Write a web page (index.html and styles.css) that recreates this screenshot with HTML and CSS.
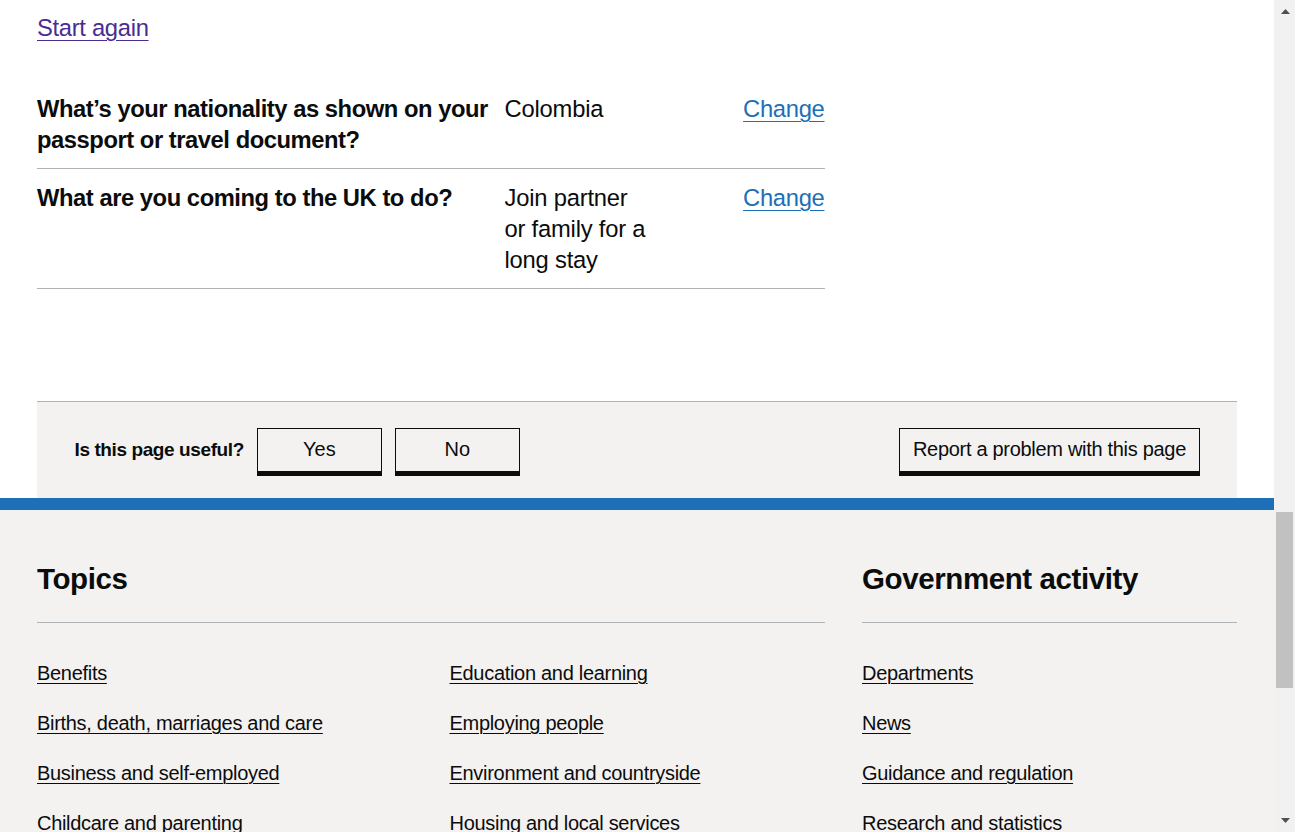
FILE: index.html
```html
<!DOCTYPE html>
<html lang="en">
<head>
<meta charset="utf-8">
<title>Check your answers - GOV.UK</title>
<link rel="stylesheet" href="styles.css">
</head>
<body>
<div class="viewport">
  <div class="page">
    <main class="container">
      <p class="start-again"><a href="#" class="link-visited">Start again</a></p>

      <dl class="summary">
        <div class="summary-row">
          <dt class="summary-key">What’s your nationality as shown on your passport or travel document?</dt>
          <dd class="summary-value">Colombia</dd>
          <dd class="summary-actions"><a href="#" class="link">Change</a></dd>
        </div>
        <div class="summary-row">
          <dt class="summary-key">What are you coming to the UK to do?</dt>
          <dd class="summary-value">Join partner or family for a long stay</dd>
          <dd class="summary-actions"><a href="#" class="link">Change</a></dd>
        </div>
      </dl>

      <div class="feedback">
        <div class="feedback-prompt">
          <h2 class="feedback-question">Is this page useful?</h2>
          <button class="feedback-btn feedback-btn-fixed">Yes</button>
          <button class="feedback-btn feedback-btn-fixed">No</button>
        </div>
        <button class="feedback-btn feedback-btn-report">Report a problem with this page</button>
      </div>
    </main>

    <footer class="footer">
      <div class="container footer-nav">
        <section class="footer-section">
          <h2 class="footer-heading">Topics</h2>
          <ul class="footer-list footer-list-two">
            <li><a href="#">Benefits</a></li>
            <li><a href="#">Births, death, marriages and care</a></li>
            <li><a href="#">Business and self-employed</a></li>
            <li><a href="#">Childcare and parenting</a></li>
            <li><a href="#">Citizenship and living in the UK</a></li>
            <li><a href="#">Crime, justice and the law</a></li>
            <li><a href="#">Disabled people</a></li>
            <li><a href="#">Driving and transport</a></li>
            <li><a href="#">Education and learning</a></li>
            <li><a href="#">Employing people</a></li>
            <li><a href="#">Environment and countryside</a></li>
            <li><a href="#">Housing and local services</a></li>
            <li><a href="#">Money and tax</a></li>
            <li><a href="#">Passports, travel and living abroad</a></li>
            <li><a href="#">Visas and immigration</a></li>
            <li><a href="#">Working, jobs and pensions</a></li>
          </ul>
        </section>
        <section class="footer-section">
          <h2 class="footer-heading">Government activity</h2>
          <ul class="footer-list">
            <li><a href="#">Departments</a></li>
            <li><a href="#">News</a></li>
            <li><a href="#">Guidance and regulation</a></li>
            <li><a href="#">Research and statistics</a></li>
            <li><a href="#">Policy papers and consultations</a></li>
            <li><a href="#">Transparency</a></li>
            <li><a href="#">How government works</a></li>
            <li><a href="#">Get involved</a></li>
          </ul>
        </section>
      </div>
    </footer>
  </div>

  <div class="scrollbar" aria-hidden="true">
    <div class="sb-btn">
      <svg width="9" height="5" viewBox="0 0 9 5"><polygon points="4.5,0 9,5 0,5" fill="#505050"/></svg>
    </div>
    <div class="sb-track"><div class="sb-thumb"></div></div>
    <div class="sb-btn sb-btn-down">
      <svg width="9" height="5" viewBox="0 0 9 5"><polygon points="0,0 9,0 4.5,5" fill="#505050"/></svg>
    </div>
  </div>
</div>
</body>
</html>
```

FILE: styles.css
```css
* {
  box-sizing: border-box;
}

html, body {
  margin: 0;
  padding: 0;
  height: 100%;
  overflow: hidden;
}

body {
  font-family: "Liberation Sans", Arial, sans-serif;
  color: #0b0c0c;
  background: #ffffff;
}

.viewport {
  display: flex;
  height: 832px;
}

.page {
  flex: 1;
  min-width: 0;
  overflow: hidden;
  background: #ffffff;
}

.container {
  width: 1200px;
  margin: 0 auto;
}

/* Links */
.link,
.link-visited {
  text-decoration: underline;
  text-decoration-thickness: 1px;
  text-underline-offset: 0.16em;
}

.link {
  color: #1d70b8;
  letter-spacing: -0.3px;
}

.link-visited {
  color: #4c2c92;
  letter-spacing: -0.3px;
}

/* Start again */
.start-again {
  margin: 0;
  padding-top: 11.5px;
  font-size: 23.75px;
  line-height: 31.25px;
}

/* Summary list */
.summary {
  width: 787.5px;
  margin: 37.75px 0 0;
  font-size: 23.75px;
  line-height: 31.25px;
}

.summary-row {
  display: grid;
  grid-template-columns: 467.5px 173px 1fr;
  border-bottom: 1px solid #b1b4b6;
}

.summary-key,
.summary-value,
.summary-actions {
  margin: 0;
  padding: 12.5px 0;
}

.summary-key {
  font-weight: 700;
  padding-right: 7px;
  letter-spacing: -0.45px;
}

.summary-value {
  padding-right: 25px;
  letter-spacing: -0.2px;
}

.summary-actions {
  text-align: right;
}

/* Feedback */
.feedback {
  margin-top: 112.5px;
  display: flex;
  justify-content: space-between;
  align-items: flex-start;
  background: #f3f2f1;
  border-top: 1px solid #b1b4b6;
  padding: 25.5px 37.5px 26px;
}

.feedback-prompt {
  display: flex;
  align-items: center;
  gap: 13px;
}

.feedback-question {
  margin: 0;
  font-size: 19px;
  font-weight: 700;
  line-height: 25px;
  letter-spacing: -0.4px;
}

.feedback-btn {
  height: 44px;
  padding: 0 12.5px;
  min-width: 125px;
  font-family: inherit;
  font-size: 20px;
  line-height: 25px;
  color: #0b0c0c;
  background: transparent;
  border: 1px solid #0b0c0c;
  border-radius: 0;
  box-shadow: 0 4px 0 #0b0c0c;
  cursor: pointer;
}

.feedback-btn-report {
  letter-spacing: -0.3px;
}

/* Footer */
.footer {
  background: #f3f2f1;
  border-top: 12.5px solid #1d70b8;
  padding-top: 50px;
  padding-bottom: 50px;
}

.footer-nav {
  display: grid;
  grid-template-columns: 787.5px 1fr;
  column-gap: 37.5px;
}

.footer-heading {
  margin: 0 0 37.5px;
  padding-bottom: 25px;
  border-bottom: 1px solid #b1b4b6;
  font-size: 29.5px;
  line-height: 37.5px;
  font-weight: 700;
  letter-spacing: -0.4px;
}

.footer-list {
  list-style: none;
  margin: 0;
  padding: 0;
  display: grid;
  row-gap: 25px;
  font-size: 20px;
  line-height: 25px;
}

.footer-list-two {
  grid-template-columns: 1fr 1fr;
  grid-template-rows: repeat(8, auto);
  grid-auto-flow: column;
  column-gap: 37.5px;
}

.footer-list a {
  color: #0b0c0c;
  text-decoration: underline;
  text-decoration-thickness: 1px;
  text-underline-offset: 0.16em;
  letter-spacing: -0.3px;
}

/* Fake browser scrollbar */
.scrollbar {
  width: 21px;
  flex: none;
  display: flex;
  flex-direction: column;
  background: #f1f1f1;
}

.sb-btn {
  height: 17px;
  display: flex;
  justify-content: center;
  align-items: flex-start;
  padding-top: 9px;
  padding-left: 1px;
}

.sb-btn-down {
  align-items: flex-end;
  padding-top: 0;
  padding-bottom: 9px;
  height: 24px;
}

.sb-track {
  flex: 1;
  padding: 0 2px;
}

.sb-thumb {
  margin-top: 495px;
  height: 176px;
  background: #c1c1c1;
}
```
